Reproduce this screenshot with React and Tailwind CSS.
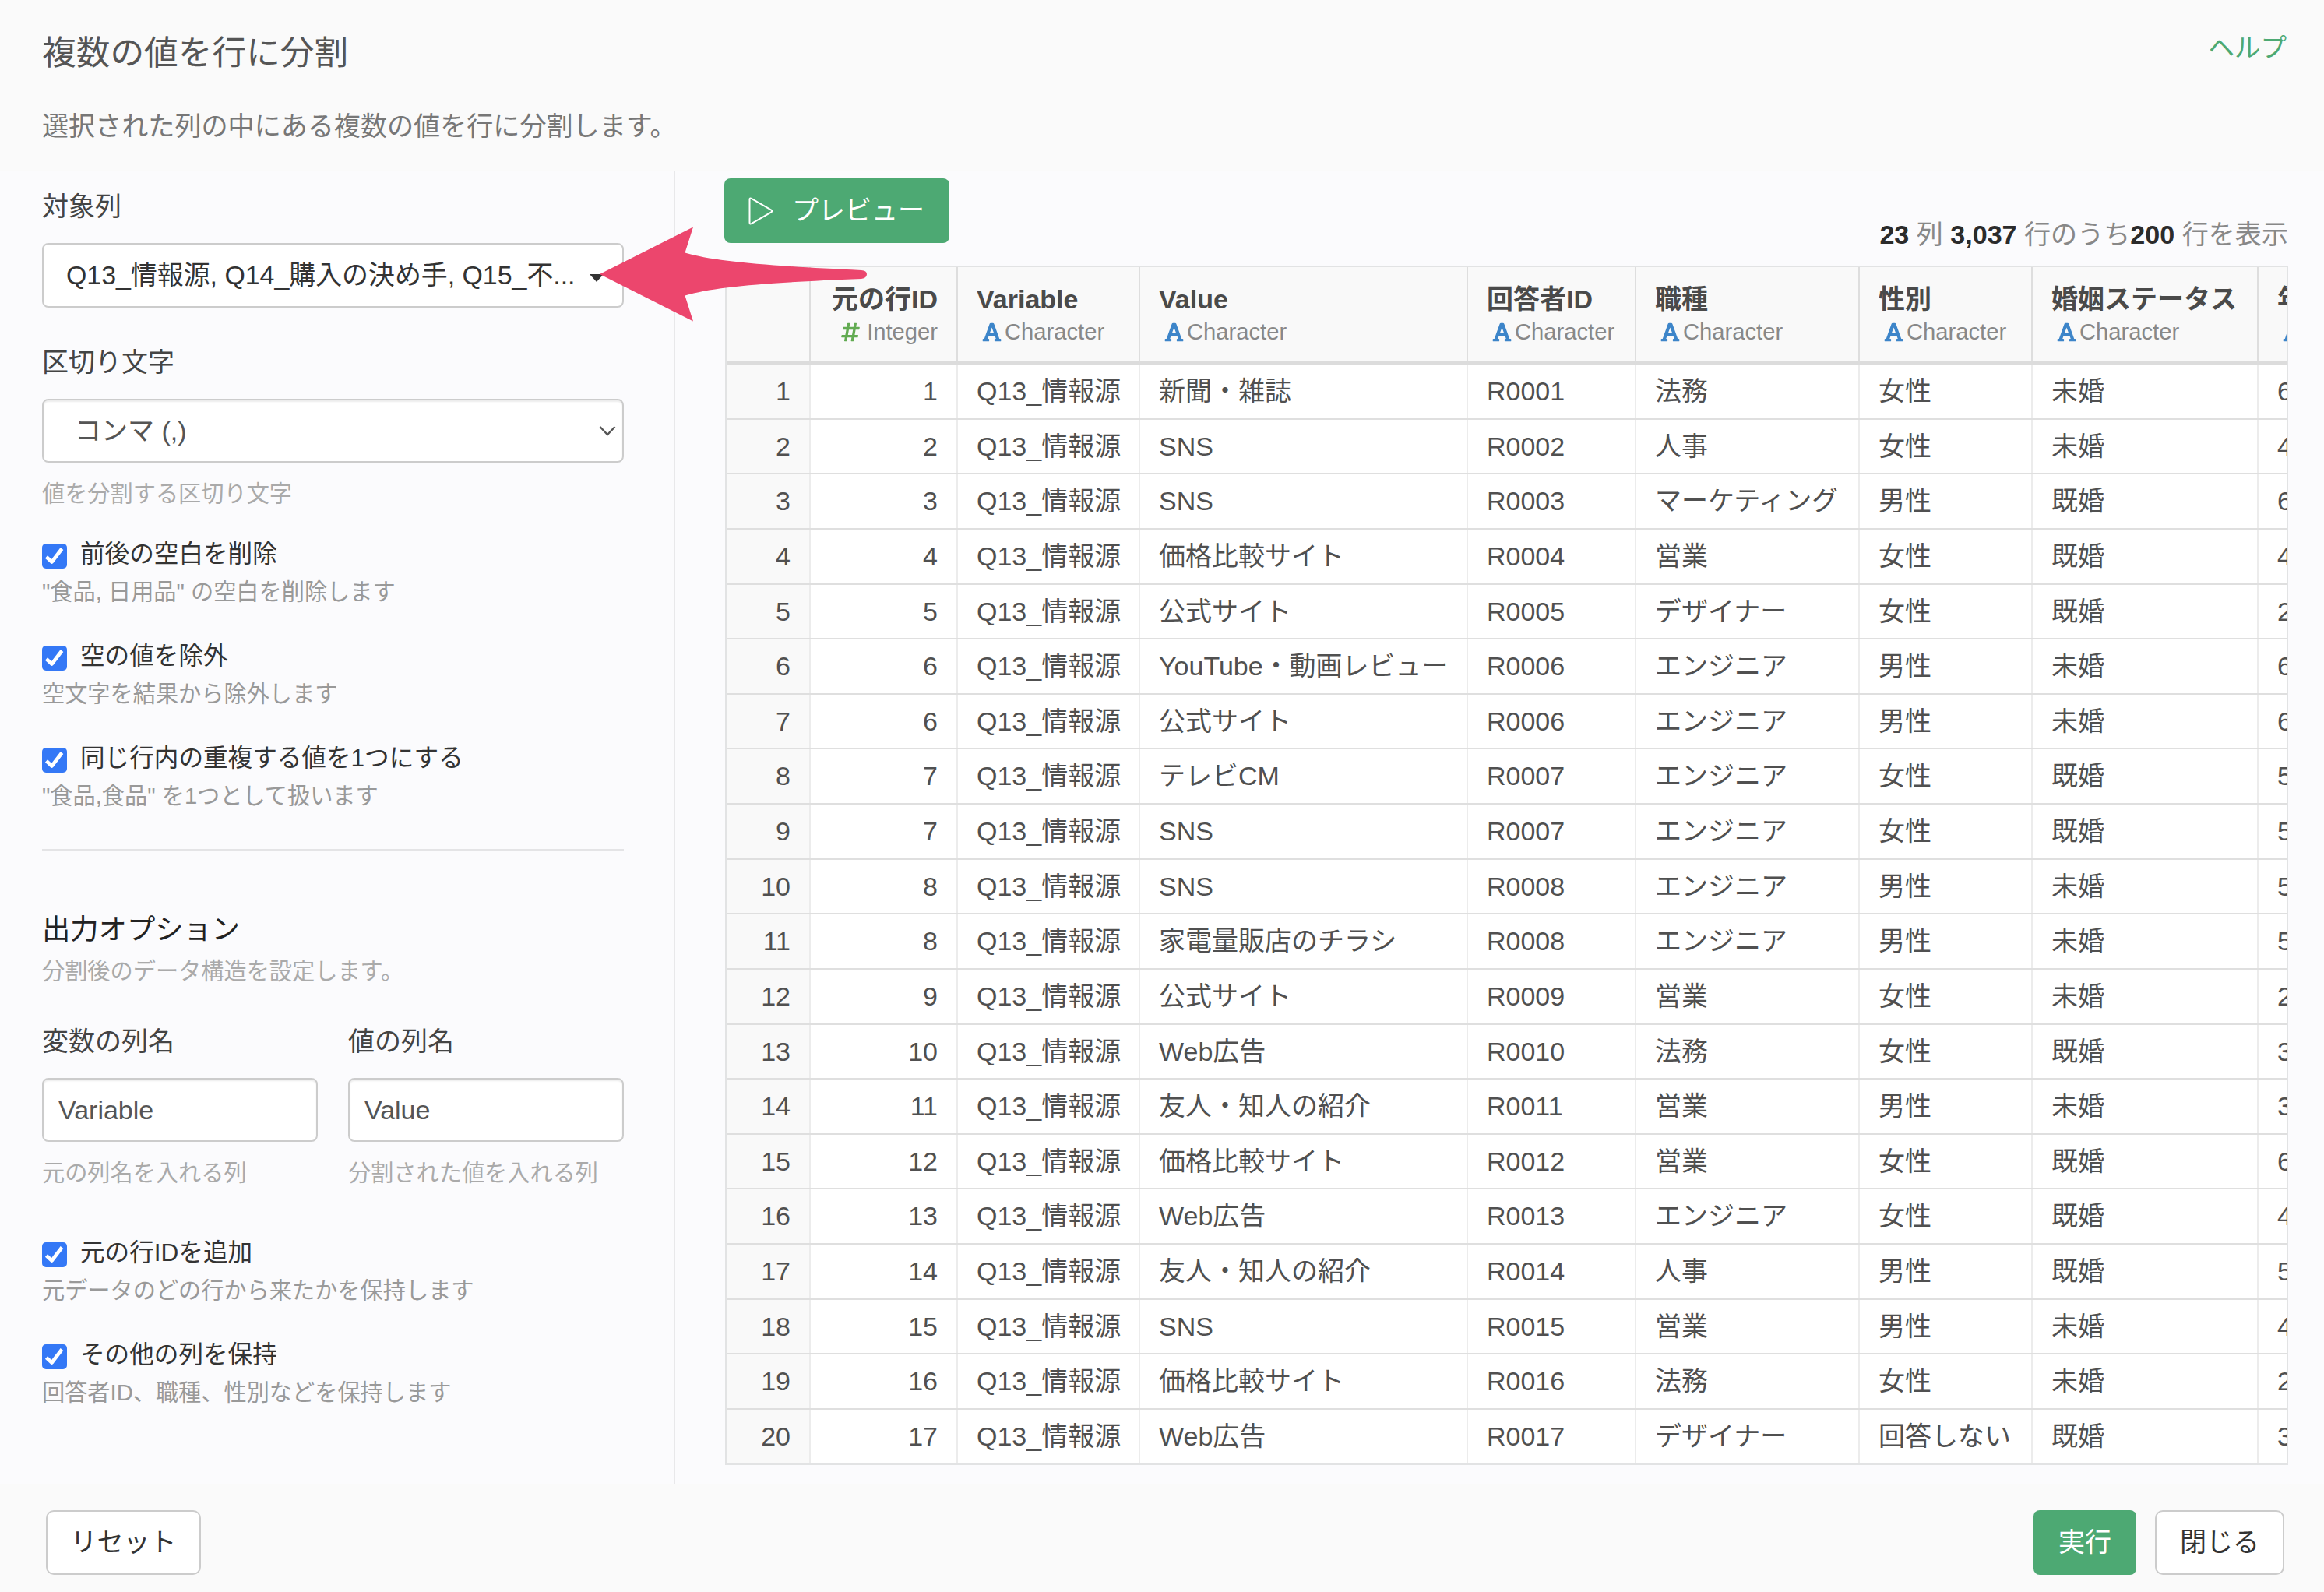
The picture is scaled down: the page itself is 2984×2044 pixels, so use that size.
import { FaFont, FaHashtag } from 'react-icons/fa';

const columns = [
  { name: '元の行ID', type: 'Integer' },
  { name: 'Variable', type: 'Character' },
  { name: 'Value', type: 'Character' },
  { name: '回答者ID', type: 'Character' },
  { name: '職種', type: 'Character' },
  { name: '性別', type: 'Character' },
  { name: '婚姻ステータス', type: 'Character' },
  { name: '年代', type: 'Character' },
];

const rows = [
  ['1', 'Q13_情報源', '新聞・雑誌', 'R0001', '法務', '女性', '未婚', '60代'],
  ['2', 'Q13_情報源', 'SNS', 'R0002', '人事', '女性', '未婚', '40代'],
  ['3', 'Q13_情報源', 'SNS', 'R0003', 'マーケティング', '男性', '既婚', '60代'],
  ['4', 'Q13_情報源', '価格比較サイト', 'R0004', '営業', '女性', '既婚', '40代'],
  ['5', 'Q13_情報源', '公式サイト', 'R0005', 'デザイナー', '女性', '既婚', '20代'],
  ['6', 'Q13_情報源', 'YouTube・動画レビュー', 'R0006', 'エンジニア', '男性', '未婚', '60代'],
  ['6', 'Q13_情報源', '公式サイト', 'R0006', 'エンジニア', '男性', '未婚', '60代'],
  ['7', 'Q13_情報源', 'テレビCM', 'R0007', 'エンジニア', '女性', '既婚', '50代'],
  ['7', 'Q13_情報源', 'SNS', 'R0007', 'エンジニア', '女性', '既婚', '50代'],
  ['8', 'Q13_情報源', 'SNS', 'R0008', 'エンジニア', '男性', '未婚', '50代'],
  ['8', 'Q13_情報源', '家電量販店のチラシ', 'R0008', 'エンジニア', '男性', '未婚', '50代'],
  ['9', 'Q13_情報源', '公式サイト', 'R0009', '営業', '女性', '未婚', '20代'],
  ['10', 'Q13_情報源', 'Web広告', 'R0010', '法務', '女性', '既婚', '30代'],
  ['11', 'Q13_情報源', '友人・知人の紹介', 'R0011', '営業', '男性', '未婚', '30代'],
  ['12', 'Q13_情報源', '価格比較サイト', 'R0012', '営業', '女性', '既婚', '60代'],
  ['13', 'Q13_情報源', 'Web広告', 'R0013', 'エンジニア', '女性', '既婚', '40代'],
  ['14', 'Q13_情報源', '友人・知人の紹介', 'R0014', '人事', '男性', '既婚', '50代'],
  ['15', 'Q13_情報源', 'SNS', 'R0015', '営業', '男性', '未婚', '40代'],
  ['16', 'Q13_情報源', '価格比較サイト', 'R0016', '法務', '女性', '未婚', '20代'],
  ['17', 'Q13_情報源', 'Web広告', 'R0017', 'デザイナー', '回答しない', '既婚', '30代'],
];

const gridCols = 'grid w-[2250px] grid-cols-[108px_189px_234px_421px_216px_287px_222px_290px_283px]';

const CheckOption = ({ label, hint, className }) => (
  <div className={className}>
    <div className="flex h-[48px] items-center">
      <span className="mt-[5px] flex h-8 w-8 items-center justify-center rounded-[5px] bg-[#3478f6]">
        <svg viewBox="0 0 32 32" className="h-8 w-8" fill="none" stroke="white" strokeWidth="4.6" strokeLinejoin="round">
          <path d="M5.5 17 L12.5 23.5 L25.5 6.5" />
        </svg>
      </span>
      <span className="ml-[17px] text-[31.6px] leading-[48px] text-[#333]">{label}</span>
    </div>
    <div className="mt-px h-[47px] text-[29.2px] leading-[48px] text-[#999]">{hint}</div>
  </div>
);

const TextField = ({ label, value, hint }) => (
  <div className="w-[354px]">
    <div className="h-[48px] text-[34px] leading-[48px] text-[#444]">{label}</div>
    <div className="mt-[23px] flex h-[82px] items-center rounded-[8px] border-2 border-[#ccc] bg-white pl-[19px] text-[34px] text-[#555] shadow-[inset_0_2px_2px_rgba(0,0,0,0.075)]">
      {value}
    </div>
    <div className="mt-[16px] h-[48px] text-[29.2px] leading-[48px] whitespace-nowrap text-[#aaa]">{hint}</div>
  </div>
);

const TypeLabel = ({ type }) => {
  if (type === 'Integer') {
    return (
      <div className="flex h-[36px] items-center justify-end text-[29.2px] leading-[36px] text-[#888]">
        <FaHashtag className="mr-[9px] h-[27px] w-[24px] text-[#62ab52]" />
        Integer
      </div>
    );
  }
  return (
    <div className="flex h-[36px] items-center pl-[7px] text-[29.2px] leading-[36px] text-[#888]">
      <FaFont className="mr-[4px] h-[27px] w-[25px] text-[#3d85c9]" />
      Character
    </div>
  );
};

const PreviewTable = () => (
  <div className="h-[1540px] w-[2007px] overflow-hidden border-2 border-[#e2e3e4] bg-white">
    <div className={`${gridCols} h-[125px] border-b-4 border-[#dcdcdc] bg-[#f9f9f9]`}>
      <div className="border-r-2 border-[#dedede]"></div>
      {columns.map((col) => (
        <div
          key={col.name}
          className={`border-r-2 border-[#dedede] px-[24px] pt-[18px] whitespace-nowrap ${col.type === 'Integer' ? 'text-right' : ''}`}
        >
          <div className="h-[47px] text-[34px] leading-[47px] font-bold text-[#4a4a4a]">{col.name}</div>
          <TypeLabel type={col.type} />
        </div>
      ))}
    </div>
    {rows.map((row, index) => (
      <div key={index} className={`${gridCols} h-[70.63px] border-b-2 border-[#dfdfdf] text-[34px] leading-[68px] text-[#505050]`}>
        <div className="border-r-2 border-[#ececec] bg-[#f9f9f9] pr-[24px] text-right">{index + 1}</div>
        {row.map((cell, i) => (
          <div key={i} className={`border-r-2 border-[#ececec] px-[24px] whitespace-nowrap ${i === 0 ? 'text-right' : ''}`}>
            {cell}
          </div>
        ))}
      </div>
    ))}
  </div>
);

const Sidebar = () => (
  <aside className="w-[867px] shrink-0 border-r-2 border-[#e8e8ea] pt-[22px] pl-[54px]">
    <div className="h-[48px] text-[34px] leading-[48px] text-[#444]">対象列</div>
    <div className="mt-[23px] flex h-[83px] w-[747px] items-center rounded-[8px] border-2 border-[#ccc] bg-white pl-[29px] text-[33.9px] whitespace-nowrap text-[#333]">
      Q13_情報源, Q14_購入の決め手, Q15_不...
      <svg viewBox="0 0 18 10" className="mt-[6px] ml-[18px] h-[10px] w-[18px]">
        <path d="M0 0 H18 L9 10 Z" fill="#333" />
      </svg>
    </div>

    <div className="mt-[46px] h-[48px] text-[34px] leading-[48px] text-[#444]">区切り文字</div>
    <div className="mt-[23px] flex h-[82px] w-[747px] items-center justify-between rounded-[8px] border-2 border-[#ccc] bg-white pr-[8px] pl-[40px] text-[34px] text-[#555] shadow-[inset_0_2px_2px_rgba(0,0,0,0.075)]">
      コンマ (,)
      <svg viewBox="0 0 22 14" className="h-[14px] w-[22px]" fill="none" stroke="#555" strokeWidth="2.4">
        <path d="M1.5 2 L11 12 L20.5 2" />
      </svg>
    </div>
    <div className="mt-[16px] h-[48px] text-[29.2px] leading-[48px] text-[#aaa]">値を分割する区切り文字</div>

    <CheckOption className="mt-[29px]" label="前後の空白を削除" hint={'"食品, 日用品" の空白を削除します'} />
    <CheckOption className="mt-[35px]" label="空の値を除外" hint="空文字を結果から除外します" />
    <CheckOption className="mt-[35px]" label="同じ行内の重複する値を1つにする" hint={'"食品,食品" を1つとして扱います'} />

    <div className="mt-[45px] w-[747px] border-t-[3px] border-[#e4e4e6]"></div>

    <div className="mt-[76px] h-[50px] text-[36.3px] leading-[50px] text-[#222]">出力オプション</div>
    <div className="mt-[4px] h-[48px] text-[29.2px] leading-[48px] text-[#aaa]">分割後のデータ構造を設定します。</div>
    <div className="mt-[42px] flex gap-[39px]">
      <TextField label="変数の列名" value="Variable" hint="元の列名を入れる列" />
      <TextField label="値の列名" value="Value" hint="分割された値を入れる列" />
    </div>

    <CheckOption className="mt-[54px]" label="元の行IDを追加" hint="元データのどの行から来たかを保持します" />
    <CheckOption className="mt-[35px]" label="その他の列を保持" hint="回答者ID、職種、性別などを保持します" />
  </aside>
);

const App = () => {
  return (
    <div className="relative flex h-[2044px] w-[2984px] flex-col overflow-hidden bg-[#fafafa] font-['Liberation_Sans','Noto_Sans_CJK_JP',sans-serif]">
      <header className="flex h-[219px] shrink-0 justify-between pr-[48px] pl-[54px]">
        <div>
          <h1 className="mt-[38px] h-[60px] text-[43.7px] leading-[60px] text-[#555]">複数の値を行に分割</h1>
          <p className="mt-[40px] h-[48px] text-[34.1px] leading-[48px] text-[#777]">選択された列の中にある複数の値を行に分割します。</p>
        </div>
        <a className="mt-[38px] h-[48px] text-[33.5px] leading-[48px] text-[#4da973]">ヘルプ</a>
      </header>

      <main className="flex h-[1686px] shrink-0 bg-[#fbfbfd]">
        <Sidebar />
        <section className="pt-[10px] pl-[64px]">
          <div className="flex h-[112px] w-[2007px] justify-between">
            <button className="-ml-px flex h-[83px] w-[289px] items-center rounded-[8px] bg-[#4da973] pl-[31px] text-[34px] text-white">
              <svg viewBox="0 0 32 36" className="h-[36px] w-[32px]" fill="none" stroke="white" strokeWidth="2" strokeLinejoin="round">
                <path d="M1.5 3.2 Q1.5 0.8 3.8 1.9 L29.3 16.6 Q31 18 29.3 19.4 L3.8 34.1 Q1.5 35.2 1.5 32.8 Z" />
              </svg>
              <span className="ml-[24px]">プレビュー</span>
            </button>
            <div className="mt-[48px] h-[48px] text-[34.1px] leading-[48px] text-[#888]">
              <b className="text-[#2b2b2b]">23</b> 列 <b className="text-[#2b2b2b]">3,037</b> 行のうち<b className="text-[#2b2b2b]">200</b> 行を表示
            </div>
          </div>
          <PreviewTable />
        </section>
      </main>

      <footer className="flex flex-1 items-start justify-between pt-[34px] pr-[51px] pl-[59px]">
        <button className="h-[83px] w-[199px] rounded-[10px] border-2 border-[#ccc] bg-white text-[34px] text-[#333]">リセット</button>
        <div className="flex gap-[24px]">
          <button className="h-[83px] w-[132px] rounded-[8px] bg-[#4da973] text-[34px] text-white">実行</button>
          <button className="h-[83px] w-[166px] rounded-[10px] border-2 border-[#ccc] bg-white text-[34px] text-[#333]">閉じる</button>
        </div>
      </footer>

      {/* Callout arrow over the column picker */}
      <svg viewBox="0 0 346 122" className="absolute top-[291px] left-[769px] h-[122px] w-[346px]">
        <path d="M1 61 L121 0.5 L110.5 33.5 C150 45 215 50 337 56 Q344 56.5 344 61 Q344 66 337 67 C215 72 150 77 110.5 88.5 L121 121.5 Z" fill="#ec466d" />
      </svg>
    </div>
  );
};

export default App;
